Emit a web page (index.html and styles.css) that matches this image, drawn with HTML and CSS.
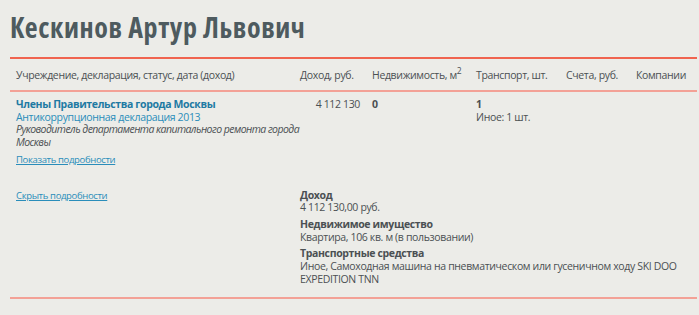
FILE: index.html
```html
<!DOCTYPE html>
<html lang="ru">
<head>
<meta charset="utf-8">
<link rel="stylesheet" href="styles.css">
</head>
<body>
<div class="page">
  <h1 class="title">Кескинов Артур Львович</h1>
  <table class="decl">
    <thead>
      <tr>
        <th class="c-org">Учреждение, декларация, статус, дата (доход)</th>
        <th class="c-inc">Доход, руб.</th>
        <th class="c-est">Недвижимость, м<sup>2</sup></th>
        <th class="c-tr">Транспорт, шт.</th>
        <th class="c-acc">Счета, руб.</th>
        <th class="c-com">Компании</th>
      </tr>
    </thead>
    <tbody>
      <tr class="main-row">
        <td class="c-org">
          <a class="org" href="#">Члены Правительства города Москвы</a>
          <a class="decl-link" href="#">Антикоррупционная декларация 2013</a>
          <div class="pos">Руководитель департамента капитального ремонта города Москвы</div>
          <a class="more" href="#">Показать подробности</a>
        </td>
        <td class="c-inc num">4 112 130</td>
        <td class="c-est"><b>0</b></td>
        <td class="c-tr"><b>1</b><div class="sub">Иное: 1 шт.</div></td>
        <td class="c-acc"></td>
        <td class="c-com"></td>
      </tr>
      <tr class="detail-row">
        <td class="c-org"><a class="more" href="#">Скрыть подробности</a></td>
        <td colspan="5" class="details">
          <div class="d-block"><div class="d-head">Доход</div><div>4 112 130,00 руб.</div></div>
          <div class="d-block"><div class="d-head">Недвижимое имущество</div><div>Квартира, 106 кв. м (в пользовании)</div></div>
          <div class="d-block"><div class="d-head">Транспортные средства</div><div>Иное, Самоходная машина на пневматическом или гусеничном ходу SKI DOO EXPEDITION TNN</div></div>
        </td>
      </tr>
    </tbody>
  </table>
</div>
</body>
</html>
```

FILE: styles.css
```css
html, body {
  margin: 0;
  padding: 0;
  background: #ecece8;
}
body {
  font-family: "Open Sans", "Noto Sans", sans-serif;
  color: #4b5053;
  font-size: 10.5px;
  letter-spacing: -0.35px;
  line-height: 12.7px;
}
.page {
  padding: 0 2px 0 10px;
}
.title {
  margin: 0;
  padding-top: 9px;
  height: 48px;
  font-size: 28px;
  line-height: 36px;
  font-weight: 700;
  font-stretch: 75%;
  letter-spacing: 0.6px;
  color: #4e5b5f;
}
.decl {
  width: 100%;
  border-collapse: collapse;
}
.decl thead tr {
  border-top: 2px solid #f0644f;
  border-bottom: 2px solid #f3a196;
}
.decl th {
  font-weight: 400;
  text-align: left;
  padding: 9px 6px 8px 6px;
  font-size: 10.5px;
  line-height: 14px;
  white-space: nowrap;
  vertical-align: middle;
}
.decl th sup {
  font-size: 8.5px;
  line-height: 0;
  vertical-align: 5px;
}
.decl td {
  vertical-align: top;
  padding: 0 6px;
}
.main-row td {
  padding-top: 6px;
  padding-bottom: 22px;
}
.detail-row {
  border-bottom: 2px solid #f3a196;
}
.detail-row td {
  padding-bottom: 8px;
}
.c-org { width: 272px; }
.c-inc { width: 60px; }
.num { text-align: right; }
.c-est { width: 92px; }
.c-tr { width: 78px; }
.c-acc { width: 58px; }
.org {
  display: block;
  font-weight: 700;
  color: #1e7aa3;
  text-decoration: none;
}
.decl-link {
  display: block;
  color: #2a8dba;
  text-decoration: none;
}
.pos {
  font-style: italic;
  letter-spacing: -0.55px;
  margin-right: -14px;
}
.more {
  display: inline-block;
  margin-top: 5px;
  font-size: 9.5px;
  color: #2a8dba;
  text-decoration: underline;
}
.detail-row .more { margin-top: 0; }
.d-block { margin-bottom: 4px; }
.d-head { font-weight: 700; }
```
